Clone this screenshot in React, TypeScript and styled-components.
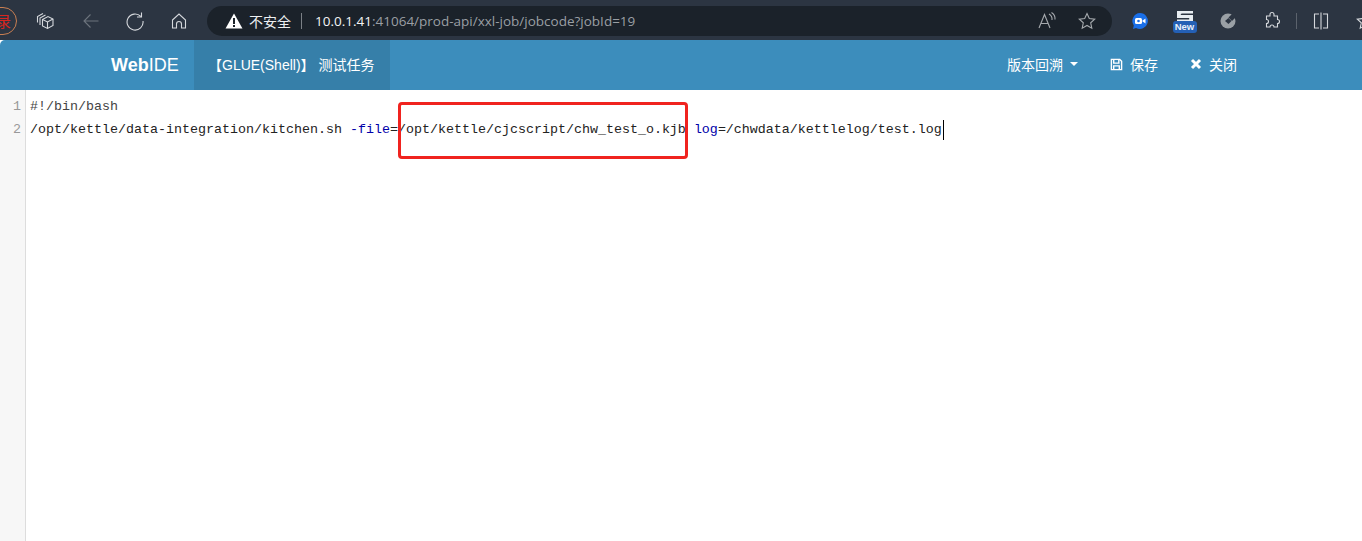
import * as React from 'react';
import styled, { createGlobalStyle } from 'styled-components';

const GlobalStyle = createGlobalStyle`
  html, body {
    margin: 0;
    padding: 0;
    background: #fff;
    overflow: hidden;
  }
`;

const SANS = '"Liberation Sans", "Noto Sans CJK SC", sans-serif';
const UI = '"Open Sans", "Noto Sans CJK SC", sans-serif';
const MONO = '"Liberation Mono", "Noto Sans CJK SC", monospace';

const Icon: React.FC<{ size?: number; children: React.ReactNode }> = ({ size = 20, children }) => (
  <svg width={size} height={size} viewBox="0 0 20 20" fill="none" stroke="currentColor" strokeWidth="1.1">
    {children}
  </svg>
);

const STAR = 'M10 2.500l2.300 5 5.400.6-4 3.700 1.100 5.400L10 14.500l-4.800 2.700 1.100-5.400-4-3.700 5.400-.6z';

const App: React.FC = () => {
  return (
    <Page>
      <GlobalStyle />
      <BrowserBar>
        <ProfileBadge>录</ProfileBadge>
        <ToolIcon $gap={18}>
          <Icon>
            <path d="M7.500 8.500 13 5.500 18 8v6.500l-5.500 3-5-2.500z" />
            <path d="M7.500 8.500l5 2.500L18 8M12.500 11v6.500" />
            <path d="M5 14V7l5.500-3" />
            <path d="M2.500 11.500v-6L8 2.500" />
          </Icon>
        </ToolIcon>
        <ToolIcon $gap={26} $dim>
          <Icon>
            <path d="M17.500 10H3M9.500 3.500 3 10l6.500 6.500" />
          </Icon>
        </ToolIcon>
        <ToolIcon $gap={24}>
          <Icon>
            <path d="M15.800 5.500A8 8 0 1 0 18 10" />
            <path d="M16.500 1.500v4.500H12" />
          </Icon>
        </ToolIcon>
        <ToolIcon $gap={24}>
          <Icon>
            <path d="M3.500 9 10 3l6.500 6v8h-4v-4a2.500 2.500 0 0 0-5 0v4h-4z" />
          </Icon>
        </ToolIcon>
        <AddressBar>
          <WarnIcon width="18" height="16" viewBox="0 0 18 16">
            <path d="M9 0.500 17.500 15.500H0.500z" fill="#fff" />
            <rect x="8" y="5" width="2" height="6" fill="#1b222a" />
            <rect x="8" y="12" width="2" height="2" fill="#1b222a" />
          </WarnIcon>
          <Insecure>不安全</Insecure>
          <AddressDivider />
          <Url>
            <b>10.0.1.41</b>:41064/prod-api/xxl-job/jobcode?jobId=19
          </Url>
          <AddressIcons>
            <svg width="22" height="20" viewBox="0 0 22 20" fill="none" stroke="currentColor" strokeWidth="1.1">
              <path d="M1 17 6.500 3.500 12 17M3 12.500h7" />
              <path d="M11 3q3.500 2 3 6M13.500 1.500q4 2.500 3.500 7" />
            </svg>
            <Icon>
              <path d={STAR} />
            </Icon>
          </AddressIcons>
        </AddressBar>
        <ToolIcon $gap={18}>
          <svg width="20" height="20" viewBox="0 0 20 20">
            <path d="M10 2a8 8 0 1 1-4 15l-3 1 .8-3.500A8 8 0 0 1 10 2z" fill="#1a6fe8" />
            <rect x="5" y="7" width="7" height="6" rx="1.500" fill="#fff" />
            <circle cx="8.500" cy="10" r="1.300" fill="#1a6fe8" />
            <path d="M12 10l3.500-2.500v5z" fill="#fff" />
          </svg>
        </ToolIcon>
        <NewExtension>
          <svg width="16" height="11" viewBox="0 0 16 11">
            <path d="M0 0h16v2.500H5q-2 0-1 1.500h12v7H0V8.500h11q2 0 1-1.500H0z" fill="#e8edf2" />
          </svg>
          <NewTag>New</NewTag>
        </NewExtension>
        <ToolIcon $gap={21}>
          <svg width="20" height="20" viewBox="0 0 20 20">
            <circle cx="10" cy="10" r="7.500" fill="#9aa0a5" />
            <path d="M14 3l4 3-4 4-3.500-3.500z" fill="#2c3542" />
            <path d="M7 10l3.500-3 3 3-3 3z" fill="#2c3542" />
          </svg>
        </ToolIcon>
        <ToolIcon $gap={24}>
          <Icon>
            <path d="M8 3.500a2 2 0 0 1 4 0V5h3.500v3.500a2 2 0 0 1 0 4V16H12a2 2 0 0 0-4 0H4.500v-3.500a2 2 0 0 0 0-4V5H8z" />
          </Icon>
        </ToolIcon>
        <ToolDivider />
        <ToolIcon $gap={14}>
          <Icon>
            <path d="M8 3H3.500v14H8M12 3h4.500v14H12M10 1.500v17" />
          </Icon>
        </ToolIcon>
        <ToolIcon $gap={24}>
          <Icon>
            <path d={STAR} />
          </Icon>
        </ToolIcon>
      </BrowserBar>

      <Navbar>
        <Brand>
          <b>Web</b>IDE
        </Brand>
        <ActiveTab>【GLUE(Shell)】 测试任务</ActiveTab>
        <NavRight>
          <NavLink>
            版本回溯<Caret />
          </NavLink>
          <NavLink>
            <svg width="13" height="13" viewBox="0 0 14 14" fill="none" stroke="#fff" strokeWidth="1.500">
              <path d="M1.500 1.500h9l2 2v9h-11z" />
              <path d="M4 1.500v4h5.500v-4M4 12.500V8.500h6v4" />
            </svg>
            保存
          </NavLink>
          <NavLink>
            <svg width="12" height="12" viewBox="0 0 12 12" stroke="#fff" strokeWidth="3">
              <path d="M2 2l8 8M10 2l-8 8" />
            </svg>
            关闭
          </NavLink>
        </NavRight>
      </Navbar>

      <Editor>
        <Gutter>
          <LineNumber>1</LineNumber>
          <LineNumber>2</LineNumber>
        </Gutter>
        <Code>
          <CodeLine>#!/bin/bash</CodeLine>
          <CodeLine>
            <Plain>/opt/kettle/data-integration/kitchen.sh </Plain>
            <Attr>-file</Attr>
            <Plain>=/opt/kettle/cjcscript/chw_test_o.kjb </Plain>
            <Attr>log</Attr>
            <Plain>=/chwdata/kettlelog/test.log</Plain>
            <Cursor />
          </CodeLine>
        </Code>
        <Annotation />
      </Editor>
    </Page>
  );
};

const Page = styled.div`
  width: 1362px;
  height: 541px;
  display: flex;
  flex-direction: column;
  overflow: hidden;
`;

const BrowserBar = styled.div`
  height: 40px;
  flex: none;
  display: flex;
  align-items: center;
  background: #2c3542;
`;

const ToolIcon = styled.div<{ $gap: number; $dim?: boolean }>`
  flex: none;
  width: 20px;
  height: 20px;
  margin: 2px 0 0 ${({ $gap }) => $gap}px;
  color: ${({ $dim }) => ($dim ? '#6d747d' : '#d5d8dc')};
`;

const ProfileBadge = styled.div`
  flex: none;
  margin: 2px 0 0 -20px;
  width: 37px;
  height: 28px;
  box-sizing: border-box;
  border: 1px solid #c97f52;
  border-radius: 14px;
  padding-left: 15px;
  color: #d9261f;
  font: 15px/26px ${UI};
`;

const AddressBar = styled.div`
  flex: none;
  margin-left: 18px;
  width: 905px;
  height: 30px;
  margin-top: 2px;
  border-radius: 15px;
  background: #1b222a;
  display: flex;
  align-items: center;
  padding-left: 18px;
  box-sizing: border-box;
`;

const WarnIcon = styled.svg`
  flex: none;
`;

const Insecure = styled.span`
  margin-left: 6px;
  color: #eceff1;
  font: 14px ${UI};
`;

const AddressDivider = styled.span`
  width: 1px;
  height: 16px;
  background: #7b8086;
  margin: 0 13px 0 10px;
`;

const Url = styled.span`
  color: #9a9fa4;
  font: 13.500px ${UI};
  b {
    color: #f3f4f5;
    font-weight: 400;
  }
`;

const AddressIcons = styled.div`
  margin-left: auto;
  margin-right: 15px;
  display: flex;
  align-items: center;
  gap: 17px;
  color: #a6aaae;
`;

const NewExtension = styled.div`
  flex: none;
  margin: 3px 0 0 22px;
  width: 25px;
  display: flex;
  flex-direction: column;
  align-items: center;
`;

const NewTag = styled.span`
  margin-top: -1px;
  width: 24px;
  height: 12px;
  border-radius: 3px;
  background: #2460b5;
  color: #e8f0fa;
  font: 700 9.500px/12px ${SANS};
  text-align: center;
`;

const ToolDivider = styled.span`
  flex: none;
  margin: 2px 0 0 14px;
  width: 1px;
  height: 16px;
  background: #5b626c;
`;

const Navbar = styled.div`
  height: 50px;
  flex: none;
  background: #3c8dbc;
  border-radius: 5px 0 0 0;
  display: flex;
  color: #fff;
  font-family: ${SANS};
  font-size: 14px;
`;

const Brand = styled.div`
  width: 194px;
  box-sizing: border-box;
  padding-left: 111px;
  font-size: 18px;
  line-height: 50px;
  b {
    font-weight: 700;
  }
`;

const ActiveTab = styled.div`
  width: 196px;
  background: #367fa9;
  box-sizing: border-box;
  padding-left: 14px;
  font-size: 14px;
  line-height: 50px;
  white-space: pre;
`;

const NavRight = styled.div`
  margin-left: auto;
  display: flex;
  margin-right: 125px;
  gap: 32px;
`;

const NavLink = styled.div`
  display: flex;
  align-items: center;
  gap: 7px;
  padding-bottom: 2px;
  font-size: 14px;
`;

const Caret = styled.span`
  width: 0;
  height: 0;
  border-top: 4px solid #fff;
  border-left: 4px solid transparent;
  border-right: 4px solid transparent;
`;

const Editor = styled.div`
  position: relative;
  flex: 1;
  display: flex;
  background: #fff;
`;

const Gutter = styled.div`
  width: 26px;
  box-sizing: border-box;
  background: #f7f7f7;
  border-right: 1px solid #ddd;
  padding-top: 5px;
`;

const LineNumber = styled.div`
  height: 23px;
  padding-right: 4px;
  text-align: right;
  color: #999;
  font: 13.330px/23px ${MONO};
`;

const Code = styled.div`
  padding: 5px 0 0 4px;
`;

const CodeLine = styled.div`
  display: flex;
  height: 23px;
  white-space: pre;
  color: #444;
  font: 13.330px/23px ${MONO};
`;

const Plain = styled.span`
  color: #222;
`;

const Attr = styled.span`
  color: #00a;
`;

const Cursor = styled.span`
  width: 1px;
  height: 20px;
  margin: 2px 0 0 1px;
  background: #000;
`;

const Annotation = styled.div`
  position: absolute;
  left: 398px;
  top: 12px;
  width: 290px;
  height: 57px;
  box-sizing: border-box;
  border: 3px solid #f0231f;
  border-radius: 4px;
`;

export default App;
